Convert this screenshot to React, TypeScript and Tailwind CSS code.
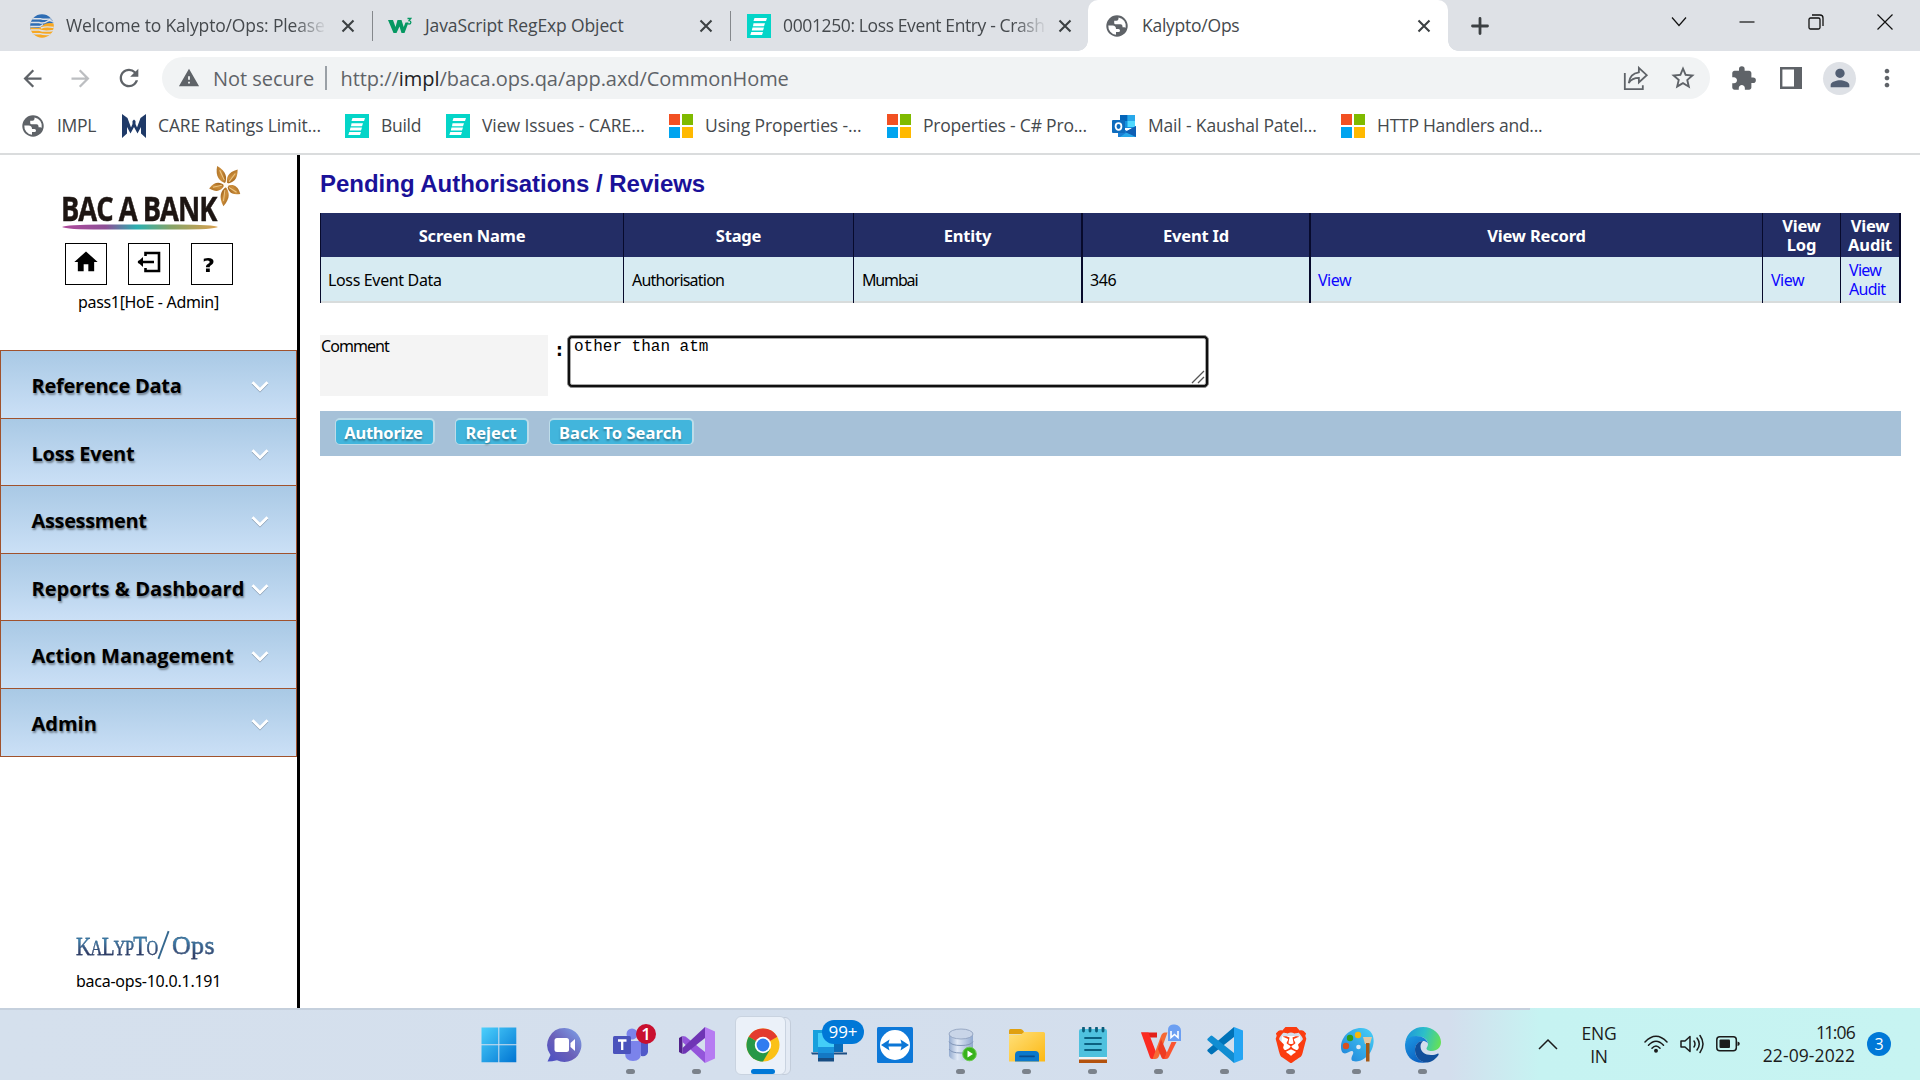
import React from "react";
import type { ReactNode } from "react";
import {
  MdArrowBack,
  MdArrowForward,
  MdExtension,
  MdHome,
  MdMoreVert,
  MdPerson,
  MdRefresh,
  MdStarOutline,
  MdWarning,
} from "react-icons/md";
import { SiBrave } from "react-icons/si";

/* ---------- favicons ---------- */

const Globe = () => (
  <svg viewBox="0 0 24 24" className="size-6 shrink-0">
    <circle cx="12" cy="12" r="10.700" fill="#5f6368" />
    <path
      d="M3.300 11.500h4.200q3.500 0 3.500 3.500h2.500q1.500 0 1.500 1.500t-1.500 1.500H11v2.800A8.800 8.800 0 0 1 3.300 11.500zM13.500 3.400v1.300q0 2-2 2H9.200v2.200q0 1.300 1.300 1.300h5q2 0 2 2v1h1.800q.8 0 1.400.6a8.800 8.800 0 0 0-7.200-10.400z"
      fill="#fff"
    />
  </svg>
);

const KalyptoFavicon = () => (
  <svg viewBox="0 0 24 24" className="size-6 shrink-0">
    <defs>
      <clipPath id="kf">
        <circle cx="12" cy="12" r="11.8" />
      </clipPath>
    </defs>
    <g clipPath="url(#kf)">
      <path d="M0 0h24v9l-6 1-6 5-12 1z" fill="#2e6db4" />
      <path d="M12 12q4-4 12-2.500V24H0V13.500l9 .5z" fill="#f7a823" />
      <g stroke="#dee1e6" strokeWidth="1.400" fill="none">
        <path d="M0 4.800h11q3 1 13 0M0 8.500h9q5 1.500 8-1t7 1M0 12.500h10l3-2M11 14q5-2 13-.5M0 16h9q5 2 15 .5M0 19.700h10q4 1.500 14 .3" />
      </g>
    </g>
  </svg>
);

const W3Favicon = () => (
  <svg viewBox="0 0 24 24" className="size-6 shrink-0">
    <path d="M0 6h5l2.500 7L9.500 6h4l2.200 7 1.800-4.500h3L16.500 19h-3l-2-6.500L8.500 19h-3z" fill="#059862" />
    <path d="M19.500 4.500h3.300l-1.800 2.200c2.600.2 2.300 3.300 0 3.300-.9 0-1.400-.4-1.800-1" stroke="#059862" strokeWidth="1.300" fill="none" />
  </svg>
);

const MantisFavicon = () => (
  <svg viewBox="0 0 24 24" className="size-6 shrink-0">
    <path d="M0 0h24v24H0z" fill="#04d5c8" />
    <path d="M7.500 4H20l-1 3H6.500zM6.500 9.200H18l-1 3H6zM5.500 13.500H17l-1 3H4.800zM4.300 18H16l-1 3H3.300z" fill="#fff" />
  </svg>
);

const CareFavicon = () => (
  <svg viewBox="0 0 24 24" className="size-6 shrink-0" fill="#1f3a68">
    <path d="M0 0l5.500 4L9 13.500l1.500-3.500V7L12 5.500 13.500 7v3l1.500 3.500L18.500 4 24 0v24l-5-4.500V13l-3.500 6.500L12 13l-3.500 6.500L5 13v6.500L0 24z" />
  </svg>
);

const MsFavicon = () => (
  <span className="grid size-6 shrink-0 grid-cols-2 gap-[2px]">
    <i className="bg-[#f25022]" />
    <i className="bg-[#7fba00]" />
    <i className="bg-[#00a4ef]" />
    <i className="bg-[#ffb900]" />
  </span>
);

const OutlookFavicon = () => (
  <svg viewBox="0 0 24 24" className="size-6 shrink-0">
    <path d="M8 1h15v13H8z" fill="#1490df" />
    <path d="M8 1h7.500v6H8z" fill="#0364b8" />
    <path d="M15.500 1H23v6h-7.500z" fill="#28a8ea" />
    <path d="M15.500 7H23v6h-7.500z" fill="#50d9ff" />
    <path d="M6 12l9 5 9-5v11H6z" fill="#1a7fd4" />
    <path d="M24 12v11H8z" fill="#28a8ea" />
    <path d="M13 18l11 5V12z" fill="#0f5fb4" />
    <rect y="6" width="13" height="13" rx="1" fill="#0f6cbd" />
    <ellipse cx="6.500" cy="12.500" rx="2.900" ry="3.300" fill="none" stroke="#fff" strokeWidth="1.800" />
  </svg>
);

/* ---------- browser chrome ---------- */

const CloseX = () => (
  <svg viewBox="0 0 24 24" className="size-6 shrink-0" stroke="#3c4043" strokeWidth="2.100">
    <path d="M6.500 6.500l11 11M17.500 6.500l-11 11" />
  </svg>
);

const fade = " [mask-image:linear-gradient(90deg,#000_88%,transparent_101%)]";

function Tab({ icon, title, cls, last }: { icon: ReactNode; title: string; cls: string; last?: boolean }) {
  return (
    <div className={"flex h-[51px] shrink-0 items-center " + (last ? "w-[357px] pl-4" : "w-[358px] pl-[15px]")}>
      {icon}
      <span className="ml-3 mr-2 w-[262px] whitespace-nowrap text-[#45494d]">
        <span className={"inline-block " + cls}>{title}</span>
      </span>
      <CloseX />
      {!last && <span className="ml-auto h-[30px] w-[1.5px] bg-[#85888c]" />}
    </div>
  );
}

function TabStrip() {
  return (
    <div className="flex h-[51px] items-center bg-[#dee1e6] pl-[15px] text-[17.500px]">
      <Tab icon={<KalyptoFavicon />} title="Welcome to Kalypto/Ops: Please" cls={"tracking-[-0.150px]" + fade} />
      <Tab icon={<W3Favicon />} title="JavaScript RegExp Object" cls="pl-px tracking-[-0.120px]" />
      <Tab last icon={<MantisFavicon />} title="0001250: Loss Event Entry - Crash" cls={"tracking-[-0.380px]" + fade} />
      <div className="relative flex h-[51px] w-[360px] shrink-0 items-center rounded-t-[10px] bg-white pl-[17px]">
        <i className="absolute -left-[10px] bottom-0 size-[10px] bg-[radial-gradient(circle_at_0_0,transparent_9.500px,#fff_10px)]" />
        <i className="absolute -right-[10px] bottom-0 size-[10px] bg-[radial-gradient(circle_at_100%_0,transparent_9.500px,#fff_10px)]" />
        <Globe />
        <span className="ml-[13px] w-[270px] text-[#45494d] tracking-[-0.250px]">Kalypto/Ops</span>
        <CloseX />
      </div>
      <svg viewBox="0 0 24 24" className="ml-[20px] size-6" stroke="#3c4043" strokeWidth="2.800" strokeLinecap="round">
        <path d="M12 4.500v15M4.500 12h15" />
      </svg>
      <div className="mb-2 ml-auto flex items-center">
        <svg viewBox="0 0 24 24" className="mr-[44px] size-6" stroke="#111" strokeWidth="1.200" fill="none">
          <path d="M5 7.500l7 8 7-8" />
        </svg>
        <svg viewBox="0 0 24 24" className="mr-[45px] size-6" stroke="#111" strokeWidth="1.200" fill="none">
          <path d="M4.500 12h15" />
        </svg>
        <svg viewBox="0 0 24 24" className="mr-[45px] size-6" stroke="#111" strokeWidth="1.300" fill="none">
          <rect x="5" y="8" width="11" height="11" rx="1.500" />
          <path d="M8 5h8q3 0 3 3v8" />
        </svg>
        <svg viewBox="0 0 24 24" className="mr-[23px] size-6" stroke="#111" strokeWidth="1.200" fill="none">
          <path d="M4.500 4.500l15 15M19.500 4.500l-15 15" />
        </svg>
      </div>
    </div>
  );
}

function Toolbar() {
  return (
    <div className="flex h-[54px] items-center bg-white pl-[19px] text-[#5f6368]">
      <MdArrowBack className="mr-[21px] size-[27px]" />
      <MdArrowForward className="mr-[21px] size-[27px] text-[#bcbec1]" />
      <MdRefresh className="mr-[19px] size-[28px]" />
      <div className="flex h-[42px] w-[1548px] items-center rounded-full bg-[#f1f3f4] pl-[16px] pr-[13px] text-[20px]">
        <MdWarning className="size-[22px]" />
        <span className="ml-[13px] w-[112px] whitespace-nowrap pt-px tracking-[-0.020px]">Not secure</span>
        <span className="h-6 w-[1.500px] bg-[#9aa0a6]" />
        <span className="ml-[14px] whitespace-nowrap pt-px tracking-[-0.050px]">
          http://<span className="text-[#202124]">impl</span>/baca.ops.qa/app.axd/CommonHome
        </span>
        <svg viewBox="0 0 24 24" className="ml-auto mr-[20px] size-[27px]" fill="none" stroke="currentColor" strokeWidth="1.600">
          <path d="M2.500 7v14.500h16V18" />
          <path d="M15 2.500l7 6.500-7 6.500v-4q-6 0-9 4.500 1-8.500 9-9.500z" />
        </svg>
        <MdStarOutline className="size-[28px]" />
      </div>
      <MdExtension className="ml-[20px] size-[27px]" />
      <svg viewBox="0 0 22 22" className="ml-[23px] size-[22px]">
        <path d="M1.200 1.200h19.600v19.600H1.200z" fill="none" stroke="currentColor" strokeWidth="2.400" />
        <path d="M14 1h7v20h-7z" fill="currentColor" />
      </svg>
      <span className="ml-[21px] flex size-[33px] items-center justify-center rounded-full bg-[#dee1e6]">
        <MdPerson className="size-[28px] text-[#525f73]" />
      </span>
      <MdMoreVert className="ml-[17px] size-[28px]" />
    </div>
  );
}

const bookmarks: { icon: ReactNode; label: string; cls: string }[] = [
  { icon: <Globe />, label: "IMPL", cls: "w-[101px] tracking-[-0.300px]" },
  { icon: <CareFavicon />, label: "CARE Ratings Limit...", cls: "w-[223px] tracking-[-0.130px]" },
  { icon: <MantisFavicon />, label: "Build", cls: "w-[101px] tracking-[-0.300px]" },
  { icon: <MantisFavicon />, label: "View Issues - CARE...", cls: "w-[223px] tracking-[-0.080px]" },
  { icon: <MsFavicon />, label: "Using Properties -...", cls: "w-[218px] tracking-[-0.120px]" },
  { icon: <MsFavicon />, label: "Properties - C# Pro...", cls: "w-[225px] tracking-[-0.200px]" },
  { icon: <OutlookFavicon />, label: "Mail - Kaushal Patel...", cls: "w-[229px] tracking-[-0.170px]" },
  { icon: <MsFavicon />, label: "HTTP Handlers and...", cls: "w-[225px] tracking-[-0.260px]" },
];

function Bookmarks() {
  return (
    <div className="flex h-[50px] items-center border-b-2 border-[#dadcdd] bg-white pb-[7px] pl-[21px] text-[17.500px] text-[#45494d]">
      {bookmarks.map((b) => (
        <span key={b.label} className={"flex shrink-0 items-center gap-3 whitespace-nowrap " + b.cls}>
          {b.icon}
          {b.label}
        </span>
      ))}
    </div>
  );
}

/* ---------- sidebar ---------- */

const Petal = ({ angle, len }: { angle: number; len: number }) => (
  <g transform={`rotate(${angle} 17 19) translate(17 19) scale(1 ${len})`}>
    <path d="M0-2C-4-6-6.500-12 0-21 6.500-12 4-6 0-2z" fill="url(#petal)" />
    <path d="M.5-16v11" stroke="#ecc684" strokeWidth="1" />
  </g>
);

const BankLogo = () => (
  <div className="relative ml-[60px] mt-[10px] h-[67px] w-[184px]">
    <svg viewBox="0 0 34 42" className="absolute right-[1px] top-px h-[42px] w-[34px] overflow-visible">
      <defs>
        <linearGradient id="petal" x1="0" y1="0" x2="1" y2="1">
          <stop offset="0" stopColor="#a0651c" />
          <stop offset="0.500" stopColor="#cd8f3c" />
          <stop offset="1" stopColor="#8f5413" />
        </linearGradient>
      </defs>
      <Petal angle={-25} len={1} />
      <Petal angle={37} len={0.92} />
      <Petal angle={122} len={0.8} />
      <Petal angle={187} len={1.02} />
      <Petal angle={258} len={0.82} />
      <circle cx="17" cy="19" r="2.500" fill="#fffaf0" />
    </svg>
    <span className="absolute left-[1px] top-[24px] origin-left scale-x-[0.815] whitespace-nowrap font-['Open_Sans',sans-serif] text-[33.500px] font-bold leading-[38px] tracking-[-1.200px] text-[#1d1512] [-webkit-text-stroke:0.500px_#1d1512]">
      BAC A BANK
    </span>
    <svg viewBox="0 0 156 6" className="absolute left-[2px] top-[59px] h-[6px] w-[156px]">
      <defs>
        <linearGradient id="rule">
          <stop offset="0" stopColor="#b04a9c" />
          <stop offset="0.280" stopColor="#8e4f97" />
          <stop offset="0.480" stopColor="#2bb0b0" />
          <stop offset="0.700" stopColor="#86a468" />
          <stop offset="1" stopColor="#dba04e" />
        </linearGradient>
      </defs>
      <path d="M0 3Q4 .5 40 .5h76q36 0 40 2.500-4 2.500-40 2.500H40Q4 5.500 0 3z" fill="url(#rule)" />
    </svg>
  </div>
);

const Square = ({ children }: { children: ReactNode }) => (
  <span className="flex size-[42px] items-center justify-center border border-black bg-white">{children}</span>
);

const menu = [
  { label: "Reference Data", cls: "h-[68px] tracking-[-0.250px]" },
  { label: "Loss Event", cls: "h-[67px] pt-[3px] tracking-[-0.200px]" },
  { label: "Assessment", cls: "h-[68px] tracking-[-0.350px]" },
  { label: "Reports & Dashboard", cls: "h-[67px] pt-[3px] tracking-[0.050px]" },
  { label: "Action Management", cls: "h-[68px]" },
  { label: "Admin", cls: "h-[68px]" },
];

function Sidebar() {
  return (
    <aside className="flex w-[300px] shrink-0 flex-col border-r-[3px] border-black bg-white">
      <BankLogo />
      <div className="ml-[65px] mt-[11px] flex gap-[21px]">
        <Square>
          <MdHome className="mb-1 size-[28px] text-black" />
        </Square>
        <Square>
          <svg viewBox="0 0 24 24" className="mb-1 size-6" fill="none" stroke="#000" strokeWidth="2.600">
            <path d="M8.500 6V3H22v18H8.500v-3M1 12h16" />
            <path d="M6 7v10l-5.500-5z" fill="#000" stroke="none" />
          </svg>
        </Square>
        <Square>
          <span className="mr-[7px] mt-[2px] scale-x-[1.150] font-['DejaVu_Sans',sans-serif] text-[19px] font-bold leading-5 text-black">?</span>
        </Square>
      </div>
      <div className="mt-[7px] pl-[78px] font-['Noto_Sans',sans-serif] text-[16px] leading-5 tracking-[-0.330px] text-black">
        pass1[HoE - Admin]
      </div>
      <nav className="mt-[38px] w-[297px] border border-t-0 border-[#a0522d]">
        {menu.map((m) => (
          <div
            key={m.label}
            className={
              "flex items-center border-t border-[#a0522d] bg-linear-to-b from-[#a9c9e5] to-[#cbe0f6] pl-[30.500px] pt-[2px] text-[20px] font-bold text-black [text-shadow:1px_2px_2px_rgba(0,0,0,0.4)] " +
              m.cls
            }
          >
            <span className="w-[219.500px] whitespace-nowrap">{m.label}</span>
            <svg viewBox="0 0 18 14" className="mt-[3px] h-[14px] w-[18px]" fill="none">
              <path d="M1.500 3.500L9 11l7.500-7.500" stroke="#7d93aa" strokeWidth="2.200" />
              <path d="M1.500 2.300L9 9.800l7.500-7.500" stroke="#fff" strokeWidth="2.800" />
            </svg>
          </div>
        ))}
      </nav>
      <div className="mt-auto h-[82px] pl-[76px] text-black">
        <div className="flex h-[38px] whitespace-nowrap pt-[2px] font-['Liberation_Serif',serif] text-[26px] leading-[36px]">
          <span className="w-[81px]">
            <span className="inline-block origin-left scale-x-[0.810] bg-linear-to-b from-[#3c87b3] from-30% to-[#2c2a52] to-75% bg-clip-text pr-1 tracking-[-0.800px] text-transparent [-webkit-text-stroke:0.300px_#35587f]">
              K<span className="text-[20px]">A</span>L<span className="text-[20px]">YP</span>
              <span className="text-[28px]">T</span>
              <span className="text-[20px]">O</span>
            </span>
          </span>
          <svg viewBox="0 0 14 32" className="mt-[2px] h-[30px] w-[13px]" stroke="#35688f" strokeWidth="2">
            <path d="M1.500 31L12.500 1" />
          </svg>
          <span className="ml-[2px] bg-linear-to-b from-[#3c87b3] from-30% to-[#2c2a52] to-90% bg-clip-text tracking-[0.300px] text-transparent [-webkit-text-stroke:0.300px_#35587f]">
            Ops
          </span>
        </div>
        <div className="mt-[7px] font-['Noto_Sans',sans-serif] text-[16px] leading-5 tracking-[-0.250px] text-black">baca-ops-10.0.1.191</div>
      </div>
    </aside>
  );
}

/* ---------- main panel ---------- */

const cols = "grid grid-cols-[303px_230px_228px_228px_453px_78px_61px]";
const heads = ["Screen Name", "Stage", "Entity", "Event Id", "View Record", "View Log", "View Audit"];
const cells = [
  { text: "Loss Event Data", cls: "pl-[7px] tracking-[-0.350px]" },
  { text: "Authorisation", cls: "pl-2 tracking-[-0.780px]" },
  { text: "Mumbai", cls: "pl-2 tracking-[-1.150px]" },
  { text: "346", cls: "pl-[7px] tracking-[-0.400px]" },
  { text: "View", cls: "pl-[7px] tracking-[-0.500px] text-[#0d05ff]" },
  { text: "View", cls: "pl-2 tracking-[-0.500px] text-[#0d05ff]" },
  { text: "View Audit", cls: "pl-2 tracking-[-0.700px] text-[#0d05ff]" },
];
const cellBorder = ["border-l", "border-l", "border-l", "border-l-2", "border-l-2", "border-l", "border-l border-r-2"];

const ActionButton = ({ label, cls }: { label: string; cls: string }) => (
  <button
    className={
      "flex h-[27px] items-center justify-center whitespace-nowrap rounded-[5px] border-2 border-l border-b border-[#bddce9] bg-[#42b5dc] pt-[2px] text-[16.500px] font-bold leading-5 text-white [text-shadow:0_2px_2px_rgba(0,0,0,0.3)] " +
      cls
    }
  >
    {label}
  </button>
);

function Main() {
  return (
    <main className="flex-1 bg-white pl-[20px] font-['Noto_Sans',sans-serif] text-[16px] text-black">
      <h1 className="h-[58px] pt-[14px] font-['Liberation_Sans',sans-serif] text-[24px] font-bold leading-[30px] tracking-[-0.020px] text-[#1a1199]">
        Pending Authorisations / Reviews
      </h1>
      <div className="w-[1581px]">
        <div className={cols + " h-[44px] bg-[#232d65] text-[16.500px] font-bold leading-[19px] tracking-[-0.180px] text-white"}>
          {heads.map((h, i) => (
            <div key={h} className={"flex items-center justify-center border-[#070a2c] px-1 text-center " + cellBorder[i]}>
              {h}
            </div>
          ))}
        </div>
        <div className={cols + " h-[46px] bg-[#d7ebf2] leading-[19px]"}>
          {cells.map((c, i) => (
            <div key={i} className={"border-[#070a2c] " + cellBorder[i]}>
              <div className={"flex h-full items-center border-b-2 border-[#d8dcdc] pt-[2px] " + c.cls}>{c.text}</div>
            </div>
          ))}
        </div>
        <div className="mt-8 flex h-[61px]">
          <div className="w-[228px] bg-[#f4f4f4] pl-px leading-[23px] tracking-[-0.950px]">Comment</div>
          <div className="w-[19px] pl-[8px] pt-[3px] font-['DejaVu_Sans',sans-serif] text-[17px] font-bold leading-6">:</div>
          <div className="relative h-[53px] w-[642px] rounded-[5px] border border-[#8d8d8d] bg-[#101010] p-[2px]">
            <div className="h-full rounded-[2px] border border-[#a9a9a9] bg-white pl-[3px] pt-px font-['Liberation_Mono',monospace] text-[16px] leading-[15px]">
              other than atm
            </div>
            <svg viewBox="0 0 14 14" className="absolute bottom-[3px] right-[3px] size-[14px]" stroke="#555" strokeWidth="1.300">
              <path d="M1 13L13 1M7 13l6-6" />
            </svg>
          </div>
        </div>
        <div className="mt-[15px] flex h-[45px] bg-[#a6c1d8] pl-[15px] pt-[7px]">
          <ActionButton label="Authorize" cls="w-[100px] mr-[20px] pr-[2px] tracking-[-0.250px]" />
          <ActionButton label="Reject" cls="w-[74px] mr-[20px] pr-px tracking-[0px]" />
          <ActionButton label="Back To Search" cls="w-[145px] pr-px tracking-[0.080px]" />
        </div>
      </div>
    </main>
  );
}

/* ---------- taskbar ---------- */

const big = "size-[36px]";

const StartIcon = () => (
  <svg viewBox="0 0 36 36" className={big}>
    <defs>
      <linearGradient id="win" x1="0" y1="0" x2="1" y2="1" gradientUnits="objectBoundingBox">
        <stop offset="0" stopColor="#4cd0fc" />
        <stop offset="1" stopColor="#0074d2" />
      </linearGradient>
    </defs>
    <path d="M.5.500h16.800v16.800H.5zM18.300.500h17v16.800h-17zM.5 18.300h16.800v17H.5zM18.300 18.300h17v17h-17z" fill="url(#win)" />
  </svg>
);

const ChatIcon = () => (
  <svg viewBox="0 0 36 36" className={big}>
    <defs>
      <linearGradient id="chat" x1="0" y1="1" x2="1" y2="0">
        <stop offset="0" stopColor="#4a4fc4" />
        <stop offset="0.450" stopColor="#6a5fb8" />
        <stop offset="1" stopColor="#7fa5ea" />
      </linearGradient>
    </defs>
    <path d="M17.500 1a17 17 0 1 1-7.500 32.300Q5 34.500 .5 34.500L3.500 28A17 17 0 0 1 17.500 1z" fill="url(#chat)" />
    <rect x="7.500" y="11" width="14.500" height="14" rx="2.500" fill="#fff" />
    <path d="M23.500 16l4.500-4v12l-4.500-4z" fill="#fff" />
  </svg>
);

const TeamsIcon = () => (
  <svg viewBox="0 0 36 36" className={big}>
    <circle cx="19" cy="7" r="5.500" fill="#7b83eb" />
    <circle cx="31" cy="9" r="4" fill="#5059c9" />
    <path d="M27 14h8v11q-1 5-7 4z" fill="#5059c9" />
    <path d="M12 14h16v12q0 8-8 8t-8-8z" fill="#7b83eb" />
    <rect x="0" y="9" width="18" height="18" rx="1.500" fill="#4b53bc" />
    <path d="M5 13.500h8.500M9.200 13.500v9.500" stroke="#fff" strokeWidth="2.300" />
  </svg>
);

const VisualStudioIcon = () => (
  <svg viewBox="0 0 36 36" className={big}>
    <path d="M0 11l3.500-2v18L0 25z" fill="#52218a" />
    <path d="M3.500 9l3 .5L26 25v11L3.500 15z" fill="#9455db" />
    <path d="M3.500 27l3-.5L26 11V0L3.500 21z" fill="#6f35b5" />
    <path d="M26 0l10 4.500v27L26 36z" fill="#b67bf2" />
  </svg>
);

const ChromeIcon = () => (
  <svg viewBox="0 0 36 36" className="size-[36px]">
    <circle cx="18" cy="18" r="16.500" fill="#fbc116" />
    <path d="M3.700 9.800A16.500 16.500 0 0 1 32.300 9.800L18 18z" fill="#e33b2e" />
    <path d="M3.700 9.800A16.500 16.500 0 0 0 18 34.500l7.200-12.300L18 18z" fill="#279847" />
    <path d="M18 9.800h14.300L18 13z" fill="#e33b2e" />
    <circle cx="18" cy="18" r="8.200" fill="#fff" />
    <circle cx="18" cy="18" r="6.400" fill="#2f7cf0" />
  </svg>
);

const DesktopIcon = () => (
  <svg viewBox="0 0 36 36" className={big}>
    <path d="M2 3h30v22H2z" fill="#17a0dd" />
    <path d="M20 3h12v22H20z" fill="#0b6cb8" />
    <path d="M0 25.500h36v2H1z" fill="#1d4f83" />
    <path d="M7 6h16v20H7z" fill="#43cdf8" />
    <path d="M7 20h16v14H7z" fill="#1a93dc" />
    <path d="M7 27h16v7.500H7z" fill="#174c82" />
    <path d="M7 26h16v5H7z" fill="#1478c4" />
  </svg>
);

const TeamViewerIcon = () => (
  <svg viewBox="0 0 36 36" className={big}>
    <rect width="36" height="36" rx="1.500" fill="#0d78d8" />
    <circle cx="18" cy="18" r="15" fill="#fff" />
    <path d="M4 18l8.500-5.500-1 4h13l-1-4L32 18l-8.500 5.500 1-4h-13l1 4z" fill="#0b76d6" />
  </svg>
);

const DatabaseIcon = () => (
  <svg viewBox="0 0 36 36" className={big}>
    <defs>
      <linearGradient id="db">
        <stop offset="0" stopColor="#94abcf" />
        <stop offset="0.350" stopColor="#e1e9f6" />
        <stop offset="1" stopColor="#91a9cf" />
      </linearGradient>
    </defs>
    <path d="M6 7v22q2 4.500 12 4.500T30 29V7z" fill="url(#db)" />
    <ellipse cx="18" cy="7" rx="12" ry="5" fill="#c9d5e8" stroke="#8a9cba" strokeWidth=".8" />
    <path d="M6 14.500q2 4 12 4t12-4M6 22q2 4 12 4t12-4" fill="none" stroke="#8296b8" strokeWidth="1" />
    <circle cx="26.500" cy="27" r="6.800" fill="#37b21c" stroke="#6bcb50" />
    <path d="M24.500 23.500l5.500 3.500-5.500 3.500z" fill="#fff" />
  </svg>
);

const FolderIcon = () => (
  <svg viewBox="0 0 36 36" className={big}>
    <defs>
      <linearGradient id="fold" x1="0" y1="0" x2="1" y2="1">
        <stop offset="0" stopColor="#ffe07a" />
        <stop offset="1" stopColor="#fcb813" />
      </linearGradient>
    </defs>
    <path d="M0 3.500q0-1.500 1.500-1.500h10q1.500 0 3 2l1.500 3H0z" fill="#e0a010" />
    <path d="M0 7.500h12l3-2.500h19.500q1.500 0 1.500 1.500V34.500H0z" fill="url(#fold)" />
    <path d="M6 34.500V28q0-4 4-4h16q4 0 4 4v6.500z" fill="#0b78cb" />
    <path d="M11 29.300h14" stroke="#0a4c8c" strokeWidth="1.800" strokeLinecap="round" />
  </svg>
);

const NotepadIcon = () => (
  <svg viewBox="0 0 36 36" className={big}>
    <path d="M4 32h28v4H4z" fill="#b3520e" />
    <path d="M4 29h28v3.500H4z" fill="#f5f5f5" />
    <path d="M4 4q0-2 2-2h24q2 0 2 2v26H4z" fill="#4fc1de" />
    <path d="M8.500 1v3M15 1v3M21.500 1v3M28 1v3" stroke="#0b5c7a" strokeWidth="2.800" strokeLinecap="round" />
    <path d="M10 11h16M10 17h16M10 23h16" stroke="#0b6080" strokeWidth="1.800" strokeLinecap="round" />
  </svg>
);

const WpsIcon = () => (
  <svg viewBox="0 0 36 36" className={big + " overflow-visible"}>
    <path d="M0 5.500h16v5H6z" fill="#e3201b" />
    <path d="M0 5.500h7.500L15 25l-2.500 7h-1q-2 0-2.500-1.500z" fill="#fb2b22" />
    <path d="M11.500 32L20 9q1.200-3.500 4-3.500h2.500L18 29q-1 3-4 3z" fill="#f66a35" />
    <path d="M20 12l6 14-2 6h-1q-2 0-2.500-1.500L17 22z" fill="#ee3c22" />
    <path d="M23 32l7.500-17h5L28 30q-1 2-3 2z" fill="#fb5430" />
    <path d="M27 14V3q0-5 5-5.500h2q6 1 6 6.500v10z" fill="#6c9ff2" />
    <path d="M30 4v6.500l3.500-3 3.500 3V4" stroke="#fff" strokeWidth="1.600" fill="none" />
  </svg>
);

const VsCodeIcon = () => (
  <svg viewBox="0 0 36 36" className={big}>
    <path d="M27 0v10L5.500 27q-1 .8-2 0L.8 24.500q-1-1 0-2z" fill="#0072b8" />
    <path d="M27 36V26L5.500 9q-1-.8-2 0L.8 11.500q-1 1 0 2z" fill="#118dd2" />
    <path d="M27 0l9 3.500v29L27 36z" fill="#25a5f3" />
  </svg>
);

const BraveIcon = () => (
  <span className="relative flex size-[36px] items-center justify-center">
    <svg viewBox="0 0 36 36" className="absolute inset-0 size-[36px]">
      <path d="M9 9h18l1 12-10 10L8 21z" fill="#fff" />
    </svg>
    <SiBrave className="relative size-[36px] text-[#fb3c10]" />
  </span>
);

const PaintIcon = () => (
  <svg viewBox="0 0 36 36" className={big}>
    <defs>
      <linearGradient id="pal" x1="1" y1="0" x2="0" y2="1">
        <stop offset="0" stopColor="#49d1f7" />
        <stop offset="1" stopColor="#1c80d8" />
      </linearGradient>
    </defs>
    <path d="M22 1C34 1 37 12 33 22c-4 10-14 14-19 12-3-1-1-5 0-7 1-3-1-4-4-2-5 3-8 1-8-5C2 10 11 1 22 1z" fill="url(#pal)" />
    <circle cx="7" cy="19" r="3.200" fill="#d9501e" />
    <circle cx="11" cy="11" r="3.200" fill="#2f9e1b" />
    <circle cx="19" cy="8" r="3.200" fill="#f7b80c" />
    <circle cx="19.500" cy="20" r="2.300" fill="#dfeaf5" />
    <path d="M24 10h9l-2 7h-5z" fill="#e3c7a2" />
    <path d="M27 16h3.500v18.500H27z" fill="#a35a17" />
  </svg>
);

const EdgeIcon = () => (
  <svg viewBox="0 0 36 36" className={big}>
    <defs>
      <linearGradient id="edgeTop" x1="0" y1="0.300" x2="1" y2="0.500">
        <stop offset="0" stopColor="#1e95dc" />
        <stop offset="0.500" stopColor="#2cbfc9" />
        <stop offset="1" stopColor="#63e05a" />
      </linearGradient>
      <linearGradient id="edgeLow" x1="0" y1="0" x2="0.600" y2="1">
        <stop offset="0" stopColor="#1e9ae4" />
        <stop offset="1" stopColor="#0b5fc0" />
      </linearGradient>
    </defs>
    <path d="M.3 15.500C1.800 6 9 0 18 0c10.500 0 18 7.500 18 15 0 5.500-4 9-9 9-4 0-5.500-1.500-5.500-2.500s1.500-2 1.500-4.500c0-4-4-7.500-10-7.500-6.500 0-11 3-12.700 6z" fill="url(#edgeTop)" />
    <path d="M0 18C0 12 6 9 11 9c6.500 0 11 3 12 7.500-1.500-2-3.500-2.500-5-2.500-5 0-8 4.500-8 9 0 7 5 12 11 12.500C9 37.500 0 30 0 18z" fill="url(#edgeLow)" />
    <path d="M10 23c0-5 3-9 8-9-1.500 1.500-2.500 3-2.500 5.500 0 5 4.500 8.500 10.500 8.500 3 0 5-.5 6.500-1.300.8-.4 1.500.4 1 1.200-4 6-9.500 7.800-13 7.600C15 35 10 30 10 23z" fill="#104f9c" />
  </svg>
);

type AppEntry = { name: string; icon: ReactNode; open?: boolean; active?: boolean; badge?: ReactNode };

const apps: AppEntry[] = [
  { name: "start", icon: <StartIcon /> },
  { name: "chat", icon: <ChatIcon /> },
  {
    name: "teams",
    icon: <TeamsIcon />,
    open: true,
    badge: (
      <span className="absolute left-[38px] top-[16px] flex size-5 items-center justify-center rounded-full bg-[#c9102f] text-[17px] font-semibold text-white">
        1
      </span>
    ),
  },
  { name: "vs", icon: <VisualStudioIcon />, open: true },
  { name: "chrome", icon: <ChromeIcon />, active: true },
  {
    name: "desktop",
    icon: <DesktopIcon />,
    badge: (
      <span className="absolute left-[26px] top-[12px] flex h-6 w-[42px] items-center justify-center rounded-full bg-[#0078d7] text-[17px] text-white">
        99+
      </span>
    ),
  },
  { name: "teamviewer", icon: <TeamViewerIcon /> },
  { name: "database", icon: <DatabaseIcon />, open: true },
  { name: "files", icon: <FolderIcon />, open: true },
  { name: "notepad", icon: <NotepadIcon />, open: true },
  { name: "wps", icon: <WpsIcon />, open: true },
  { name: "vscode", icon: <VsCodeIcon />, open: true },
  { name: "brave", icon: <BraveIcon />, open: true },
  { name: "paint", icon: <PaintIcon />, open: true },
  { name: "edge", icon: <EdgeIcon />, open: true },
];

function Taskbar() {
  return (
    <footer className="flex h-[72px] bg-[linear-gradient(90deg,#d5e0ed_0,#d3deed_1450px,#c6f3f2_1540px,#c7f4f2_100%)] text-[#1b1b1b]">
      <div className="flex w-[1530px] border-t-2 border-[#c5d0dd] pl-[466px]">
        {apps.map((a) => (
          <div key={a.name} className="relative -mt-[2px] h-[72px] w-[66px] shrink-0">
            {a.active && (
              <>
                <i className="absolute left-[14px] top-[9px] h-[58px] w-[47px] rounded-[6px] border border-[#c3cddb] bg-[#e3eaf4]" />
                <i className="absolute left-[5px] top-[8px] h-[59px] w-[51px] rounded-[6px] border border-[#c9d3e0] bg-[#ebf1f9]" />
              </>
            )}
            <div className="absolute left-[15px] top-[19px]">{a.icon}</div>
            {a.open && <i className="absolute left-[28px] top-[61px] h-[5px] w-[9px] rounded-full bg-[#7b828b]" />}
            {a.active && <i className="absolute left-[21px] top-[61px] h-[5px] w-[24px] rounded-full bg-[#0078d7]" />}
            {a.badge}
          </div>
        ))}
      </div>
      <div className="flex flex-1 items-center pl-[8px]">
        <svg viewBox="0 0 20 12" className="h-3 w-5" fill="none" stroke="#1b1b1b" strokeWidth="1.500">
          <path d="M1 11l9-9 9 9" />
        </svg>
        <div className="ml-[11px] w-[60px] pt-px text-center text-[17.500px] leading-[23px] tracking-[-0.200px]">
          ENG
          <br />
          IN
        </div>
        <svg viewBox="0 0 24 18" className="ml-[15px] h-[18px] w-6" fill="none" stroke="#1b1b1b" strokeWidth="1.500" strokeLinecap="round">
          <path d="M1 7q11-11.500 22 0M4.500 10.200q7.500-8 15 0M8 13.300q4-4.500 8 0" />
          <circle cx="12" cy="15.800" r="1.200" fill="#1b1b1b" />
        </svg>
        <svg viewBox="0 0 24 20" className="ml-[12px] h-5 w-6" fill="none" stroke="#1b1b1b" strokeWidth="1.500" strokeLinecap="round" strokeLinejoin="round">
          <path d="M1 7v6h4l5 4.500V2.500L5 7zM14 7q2 3 0 6M17 4q4.500 6 0 12M20 1.500q6 8.500 0 17" />
        </svg>
        <svg viewBox="0 0 24 16" className="ml-[12px] h-4 w-6">
          <rect x=".8" y=".8" width="19.500" height="14" rx="3" fill="none" stroke="#1b1b1b" strokeWidth="1.500" />
          <rect x="3.500" y="3.500" width="10.500" height="8.600" rx="1" fill="#1b1b1b" />
          <path d="M21.500 5.500q2.300.5 2.300 2.300t-2.300 2.300z" fill="#1b1b1b" />
        </svg>
        <div className="ml-auto whitespace-nowrap text-right text-[17.500px] leading-[23px] tracking-[0.100px]">
          <span className="tracking-[-1.600px]">11</span>
          <span className="tracking-[-0.800px]">:06</span>
          <br />
          22-09-2022
        </div>
        <span className="ml-[12px] mr-[29px] flex size-6 items-center justify-center rounded-full bg-[#0078d7] text-[16px] text-white">3</span>
      </div>
    </footer>
  );
}

export default function App() {
  return (
    <div className="flex h-[1080px] w-[1920px] flex-col overflow-hidden bg-white font-['Open_Sans',sans-serif]">
      <TabStrip />
      <Toolbar />
      <Bookmarks />
      <div className="flex min-h-0 flex-1">
        <Sidebar />
        <Main />
      </div>
      <Taskbar />
    </div>
  );
}
